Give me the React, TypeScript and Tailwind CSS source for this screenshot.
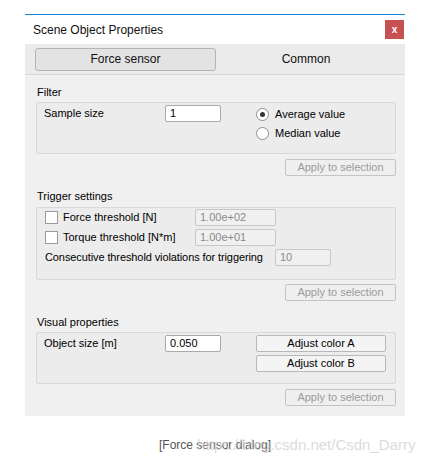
import React from 'react';

const font = "font-['Liberation_Sans',Arial,sans-serif]";

const ApplyButton = () => (
  <div className="flex justify-end">
    <button
      disabled
      className="h-[17px] w-[111px] rounded-[2px] border border-[#c4c4c4] bg-[#efefef] text-[11px] leading-[15px] text-[#9b9b9b]"
    >
      Apply to selection
    </button>
  </div>
);

const GroupLabel = ({ children, className = '' }: { children: React.ReactNode; className?: string }) => (
  <div className={`h-[16px] pl-[1px] text-[11px] leading-[16px] text-black ${className}`}>{children}</div>
);

const Group = ({ children, className = '' }: { children: React.ReactNode; className?: string }) => (
  <div className={`rounded-[2px] border border-[#d8d8d8] bg-[#ececec] ${className}`}>{children}</div>
);

const Checkbox = () => (
  <span className="block h-[13px] w-[13px] border border-[#9a9a9a] bg-white" />
);

const Radio = ({ checked }: { checked?: boolean }) => (
  <span className="flex h-[13px] w-[13px] items-center justify-center rounded-full border border-[#8f8f8f] bg-white">
    {checked && <span className="h-[5px] w-[5px] rounded-full bg-[#333]" />}
  </span>
);

const DisabledInput = ({ value, w }: { value: string; w: string }) => (
  <div
    className={`h-[17px] ${w} rounded-[2px] border border-[#c8c8c8] bg-[#f0f0f0] pl-[4px] text-[11px] leading-[15px] text-[#8a8a8a]`}
  >
    {value}
  </div>
);

const TextInput = ({ value }: { value: string }) => (
  <div className="h-[17px] w-[56px] rounded-[2px] border border-[#a9a9a9] bg-white pl-[4px] text-[11px] leading-[15px] text-black">
    {value}
  </div>
);

export default function App() {
  return (
    <div className={`h-[467px] w-[438px] bg-white ${font}`}>
      <div className="pl-[25px] pt-[14px]">
        <div className="w-[380px] border-t border-[#1a86d9]">
          {/* title bar */}
          <div className="flex h-[29px] items-center justify-between bg-white pl-[8px] pr-[1px]">
            <span className="text-[12px] text-[#111]">Scene Object Properties</span>
            <span className="flex h-[19px] w-[19px] items-center justify-center bg-[#c75050] text-[10px] font-bold leading-none text-white">
              x
            </span>
          </div>

          {/* tabs */}
          <div className="flex h-[31px] items-center border-b border-[#d6d6d6] bg-[#ebebeb] pl-[10px] pr-[9px]">
            <div className="flex h-[23px] w-[181px] items-center justify-center rounded-[3px] border border-[#b4b4b4] bg-[#e3e3e3] text-[12px] text-[#111]">
              Force sensor
            </div>
            <div className="flex flex-1 items-center justify-center text-[12px] text-[#111]">Common</div>
          </div>

          {/* body */}
          <div className="bg-[#f0f0f0] pb-[10px] pl-[11px] pr-[9px] pt-[9px]">
            <GroupLabel>Filter</GroupLabel>
            <Group className="mt-[2px] h-[52px]">
              <div className="flex pl-[7px] pt-[2px]">
                <div className="flex h-[17px] w-[121px] items-center text-[11px]">Sample size</div>
                <TextInput value="1" />
                <div className="ml-[35px] flex flex-col">
                  <div className="flex h-[19px] items-center gap-[6px] text-[11px]">
                    <Radio checked />
                    Average value
                  </div>
                  <div className="flex h-[19px] items-center gap-[6px] text-[11px]">
                    <Radio />
                    Median value
                  </div>
                </div>
              </div>
            </Group>
            <div className="mt-[5px]">
              <ApplyButton />
            </div>

            <GroupLabel className="mt-[12px]">Trigger settings</GroupLabel>
            <Group className="mt-[3px] h-[73px]">
              <div className="flex flex-col gap-[3px] pl-[8px] pt-[1px]">
                <div className="flex h-[17px] items-center">
                  <Checkbox />
                  <span className="ml-[5px] w-[132px] text-[11px]">Force threshold [N]</span>
                  <DisabledInput value="1.00e+02" w="w-[81px]" />
                </div>
                <div className="flex h-[17px] items-center">
                  <Checkbox />
                  <span className="ml-[5px] w-[132px] text-[11px]">Torque threshold [N*m]</span>
                  <DisabledInput value="1.00e+01" w="w-[81px]" />
                </div>
                <div className="flex h-[17px] items-center">
                  <span className="w-[230px] text-[11px] tracking-[-0.1px]">
                    Consecutive threshold violations for triggering
                  </span>
                  <DisabledInput value="10" w="w-[56px]" />
                </div>
              </div>
            </Group>
            <div className="mt-[4px]">
              <ApplyButton />
            </div>

            <GroupLabel className="mt-[13px]">Visual properties</GroupLabel>
            <Group className="mt-[2px] h-[52px]">
              <div className="flex pl-[7px] pt-[2px]">
                <div className="flex h-[17px] w-[121px] items-center text-[11px]">Object size [m]</div>
                <TextInput value="0.050" />
                <div className="ml-[35px] flex flex-col gap-[3px]">
                  <button className="h-[17px] w-[130px] rounded-[2px] border border-[#b8b8b8] bg-[#f4f4f4] text-[11px] leading-[15px]">
                    Adjust color A
                  </button>
                  <button className="h-[17px] w-[130px] rounded-[2px] border border-[#b8b8b8] bg-[#f4f4f4] text-[11px] leading-[15px]">
                    Adjust color B
                  </button>
                </div>
              </div>
            </Group>
            <div className="mt-[5px]">
              <ApplyButton />
            </div>
          </div>
        </div>
      </div>

      {/* caption with watermark over it */}
      <div className="relative mt-[19px] h-[20px]">
        <span className="absolute left-[159px] top-0 text-[12px] leading-[20px] text-[#555]">
          [Force sensor dialog]
        </span>
        <span className="absolute left-[197px] top-0 text-[15px] leading-[20px] text-[#d4d4d4] opacity-80">
          https://blog.csdn.net/Csdn_Darry
        </span>
      </div>
    </div>
  );
}
